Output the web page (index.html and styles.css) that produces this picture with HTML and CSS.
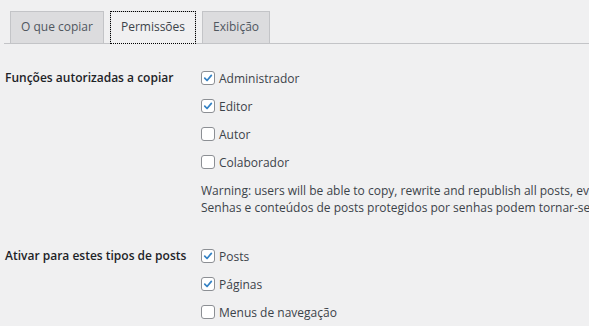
FILE: index.html
```html
<!DOCTYPE html>
<html lang="pt-BR">
<head>
<meta charset="utf-8">
<link rel="stylesheet" href="styles.css">
</head>
<body>
<nav class="tabs">
  <a class="tab">O que copiar</a>
  <a class="tab active">Permissões</a>
  <a class="tab">Exibição</a>
</nav>
<div class="form">
  <section class="row first">
    <div class="label">Funções autorizadas a copiar</div>
    <div class="field">
      <label class="opt"><span class="cb on"><svg viewBox="0 0 14 14"><path d="M3.2 7.2 L5.9 9.9 L10.9 3.9"/></svg></span>Administrador</label>
      <label class="opt"><span class="cb on"><svg viewBox="0 0 14 14"><path d="M3.2 7.2 L5.9 9.9 L10.9 3.9"/></svg></span>Editor</label>
      <label class="opt"><span class="cb"></span>Autor</label>
      <label class="opt"><span class="cb"></span>Colaborador</label>
      <p class="note">Warning: users will be able to copy, rewrite and republish all posts, even those they did not create.<br>Senhas e conteúdos de posts protegidos por senhas podem tornar-se acessíveis para usuários e funções sem permissão.</p>
    </div>
  </section>
  <section class="row second">
    <div class="label">Ativar para estes tipos de posts</div>
    <div class="field">
      <label class="opt"><span class="cb on"><svg viewBox="0 0 14 14"><path d="M3.2 7.2 L5.9 9.9 L10.9 3.9"/></svg></span>Posts</label>
      <label class="opt"><span class="cb on"><svg viewBox="0 0 14 14"><path d="M3.2 7.2 L5.9 9.9 L10.9 3.9"/></svg></span>Páginas</label>
      <label class="opt"><span class="cb"></span>Menus de navegação</label>
    </div>
  </section>
</div>
</body>
</html>
```
FILE: styles.css
```css
html, body {
  margin: 0;
  padding: 0;
  background: #f0f0f1;
  overflow: hidden;
}
body {
  font-family: "Open Sans", "Noto Sans", sans-serif;
  font-size: 12px;
  color: #3c434a;
  width: 589px;
  height: 326px;
}
.tabs {
  display: flex;
  margin-left: 4px;
  padding-top: 11px;
  border-bottom: 1px solid #c3c4c7;
}
.tab {
  margin-left: 6px;
  padding: 5px 10px 6px;
  border: 1px solid #c3c4c7;
  border-bottom: none;
  background: #dcdcde;
  color: #50575e;
  font-size: 12px;
  line-height: 20px;
  white-space: nowrap;
}
.tab.active {
  background: #f0f0f1;
  color: #3c434a;
  margin-bottom: -1px;
  padding-bottom: 7px;
  outline: 1px dotted #000;
  outline-offset: -1px;
}
.form {
  padding-left: 5px;
}
.row {
  display: grid;
  grid-template-columns: 196px 1fr;
}
.row.first {
  margin-top: 20px;
}
.row.second {
  margin-top: 26px;
}
.label {
  font-weight: 600;
  color: #1d2327;
  line-height: 28px;
  white-space: nowrap;
}
.field {
  min-width: 0;
  white-space: nowrap;
}
.opt {
  display: flex;
  align-items: center;
  height: 28px;
  color: #3c434a;
}
.cb {
  box-sizing: border-box;
  width: 14px;
  height: 14px;
  margin-right: 4px;
  border: 1px solid #8c8f94;
  border-radius: 3px;
  background: #fff;
  display: flex;
}
.cb svg {
  width: 12px;
  height: 12px;
}
.cb path {
  fill: none;
  stroke: #3582c4;
  stroke-width: 2;
  stroke-linecap: round;
  stroke-linejoin: round;
}
.note {
  margin: 6px 0 0;
  line-height: 17px;
  font-size: 12px;
}
```
